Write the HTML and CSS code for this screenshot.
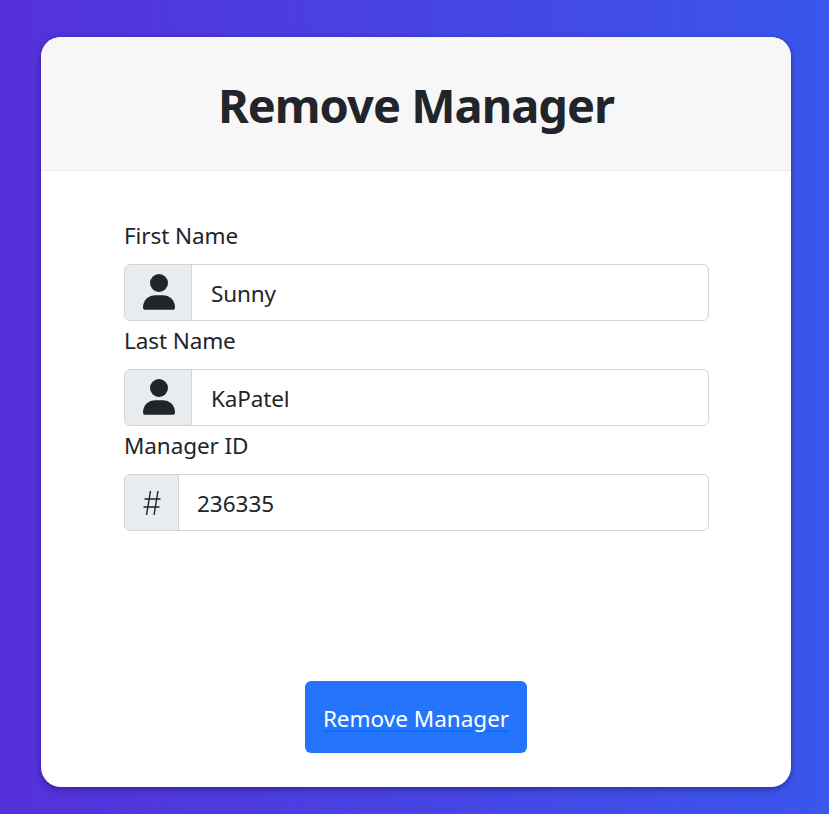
FILE: index.html
```html
<!DOCTYPE html>
<html lang="en">
<head>
<meta charset="utf-8">
<title>Remove Manager</title>
<link rel="stylesheet" href="styles.css">
</head>
<body>
<main class="card">
  <header class="card-header"><h1>Remove Manager</h1></header>
  <form class="card-body">
    <label for="first">First Name</label>
    <div class="group">
      <span class="addon"><svg class="person" viewBox="0 0 32 36"><circle cx="16" cy="9" r="9"/><path d="M0 33.500C0 26 5.500 21.300 12.500 21.300h7C26.500 21.300 32 26 32 33.500c0 1.400-.9 2.300-2.200 2.300H2.200C.9 35.800 0 34.900 0 33.500z"/></svg></span>
      <input id="first" value="Sunny">
    </div>
    <label for="last">Last Name</label>
    <div class="group">
      <span class="addon"><svg class="person" viewBox="0 0 32 36"><circle cx="16" cy="9" r="9"/><path d="M0 33.500C0 26 5.500 21.300 12.500 21.300h7C26.500 21.300 32 26 32 33.500c0 1.400-.9 2.300-2.200 2.300H2.200C.9 35.800 0 34.900 0 33.500z"/></svg></span>
      <input id="last" value="KaPatel">
    </div>
    <label for="mid">Manager ID</label>
    <div class="group">
      <span class="addon small"><svg class="hash" viewBox="0 0 18 24"><path d="M7.500 0 3.500 24M15 0l-4 24M1.500 8h16M.5 16h16"/></svg></span>
      <input class="digits" id="mid" value="236335">
    </div>
    <button type="button" class="submit"><span>Remove Manager</span></button>
  </form>
</main>
</body>
</html>
```
FILE: styles.css
```css
* { box-sizing: border-box; }
body {
  margin: 0;
  height: 814px;
  padding: 37px 38px 27px 41px;
  overflow: hidden;
  background: linear-gradient(to right, #5530db, #3a56ec);
  font-family: "Noto Sans", sans-serif;
  color: #212529;
}
.card {
  height: 750px;
  border-radius: 20px;
  background: #fff;
  box-shadow: 0 2px 7px rgba(0, 0, 0, .38);
  overflow: hidden;
}
.card-header {
  height: 134px;
  background: #f7f7f7;
  border-bottom: 1px solid #ececec;
  padding-top: 36px;
}
h1 {
  margin: 0;
  font-size: 47px;
  line-height: 64px;
  font-weight: 700;
  letter-spacing: -1px;
  text-align: center;
  white-space: nowrap;
}
.card-body { display: flex; flex-direction: column; padding: 45px 82px 0 83px; }
label {
  height: 48px;
  font-size: 22.500px;
  line-height: 40px;
  letter-spacing: -.1px;
  white-space: nowrap;
}
.group {
  display: flex;
  height: 57px;
  border: 1px solid #ced4da;
  border-radius: 6px;
}
.addon {
  width: 67px;
  display: flex;
  align-items: center;
  justify-content: center;
  padding: 0 0 1px 2px;
  background: #e9ecef;
  border-right: 1px solid #ced4da;
  border-radius: 5px 0 0 5px;
}
.small { width: 54px; padding: 1px 0 0 1px; }
.person { width: 32px; height: 36px; fill: #212529; }
.hash { width: 18px; height: 24px; fill: none; stroke: #212529; stroke-width: 1.400; }
input {
  flex: 1;
  min-width: 0;
  border: 0;
  padding: 1px 19px 0;
  background: transparent;
  font: 22.500px "Noto Sans", sans-serif;
  letter-spacing: -.15px;
  color: #212529;
}
.digits { padding: 1px 18px 0; letter-spacing: 0; }
.submit {
  width: 222px;
  height: 72px;
  margin: 150px 0 0 181px;
  padding: 3px 0 0;
  border: 0;
  border-radius: 6px;
  background: #2575fc;
  color: #fff;
  font: 22.500px "Noto Sans", sans-serif;
}
.submit span {
  text-decoration: underline 2px #0d6efd;
  text-underline-offset: 3px;
}
```
